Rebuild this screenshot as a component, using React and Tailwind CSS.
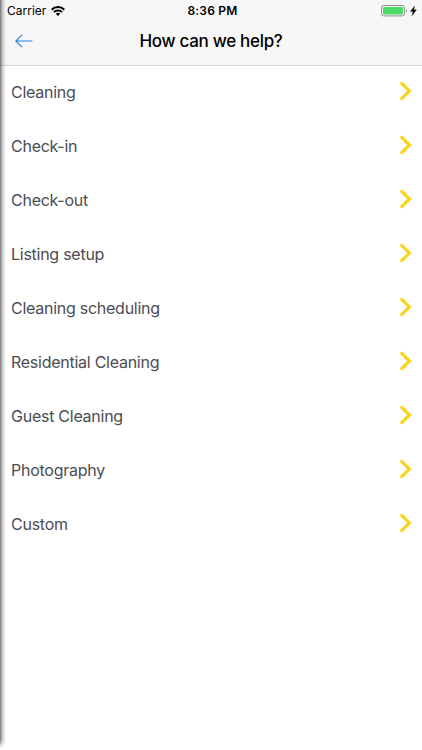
const SERVICES = [
    'Cleaning',
    'Check-in',
    'Check-out',
    'Listing setup',
    'Cleaning scheduling',
    'Residential Cleaning',
    'Guest Cleaning',
    'Photography',
    'Custom',
]

function WifiIcon() {
    return (
        <svg width="14" height="10" viewBox="0 0 14 10" fill="none" stroke="#000" strokeWidth="2">
            <path d="M0.7 3.7a8.9 8.9 0 0 1 12.6 0" />
            <path d="M2.9 6.1a5.8 5.8 0 0 1 8.2 0" />
            <path d="M7 10L4.8 7.8a3.1 3.1 0 0 1 4.4 0z" fill="#000" stroke="none" />
        </svg>
    )
}

function BatteryIcon() {
    return (
        <svg width="36" height="12" viewBox="0 0 36 12" fill="none">
            <rect x="0.5" y="0.5" width="23" height="10.4" rx="2.3" stroke="#8f8f8f" />
            <rect x="2" y="2" width="20" height="7.4" rx="1" fill="#4cd964" />
            <path d="M25 3.9c1.3 0.5 1.3 3.1 0 3.6z" fill="#8f8f8f" />
            <path d="M33.6 0.9L29.4 6.4h2.6l-1 4.4 4.4-6h-2.7z" fill="#000" stroke="#000" strokeWidth="0.3" />
        </svg>
    )
}

function StatusBar() {
    return (
        <div className="grid grid-cols-3 items-center h-[22px] pl-[7px] pr-[5px] text-black">
            <div className="flex items-center gap-[5px] text-[12px]">
                <span>Carrier</span>
                <WifiIcon />
            </div>
            <div className="pl-[1px] text-center text-[12px] font-semibold tracking-[0.2px]">8:36 PM</div>
            <div className="flex justify-end">
                <BatteryIcon />
            </div>
        </div>
    )
}

function NavBar() {
    return (
        <div className="grid grid-cols-[60px_1fr_60px] items-center h-[43px] pb-[5px]">
            <button className="pl-[15px]" aria-label="Back">
                <svg width="18" height="14" viewBox="0 0 18 14" fill="none" stroke="#2583e0" strokeWidth="1.2">
                    <path d="M17.4 7H1M7 0.8L0.9 7 7 13.2" />
                </svg>
            </button>
            <h1 className="pt-[2px] text-center text-[17px] font-medium tracking-[-0.31px] text-black whitespace-nowrap">
                How can we help?
            </h1>
        </div>
    )
}

export default function App() {
    return (
        <div className="relative h-screen overflow-hidden bg-white font-['Inter',sans-serif]">
            <header className="h-[66px] bg-[#f7f7f7] border-b border-[#d8d8d8]">
                <StatusBar />
                <NavBar />
            </header>

            <main>
                {SERVICES.map((service) => (
                    <button key={service} className="flex items-center justify-between w-full h-[54px] pl-[11px] pr-[10px] pb-[2px] text-left">
                        <span className="text-[16px] tracking-[-0.26px] text-[#4c4c51]">{service}</span>
                        <svg className="mb-[2px]" width="13" height="20" viewBox="0 0 13 20" fill="none" stroke="#fbd51d" strokeWidth="3.2">
                            <path d="M1.7 1.3L10.4 10 1.7 18.7" />
                        </svg>
                    </button>
                ))}
            </main>

            {/* shadow of the screen edge */}
            <div className="absolute left-0 top-0 bottom-[2px] w-[6px] bg-linear-to-r from-black/50 via-black/15 to-transparent mask-b-from-[calc(100%-8px)] pointer-events-none" />
        </div>
    )
}
